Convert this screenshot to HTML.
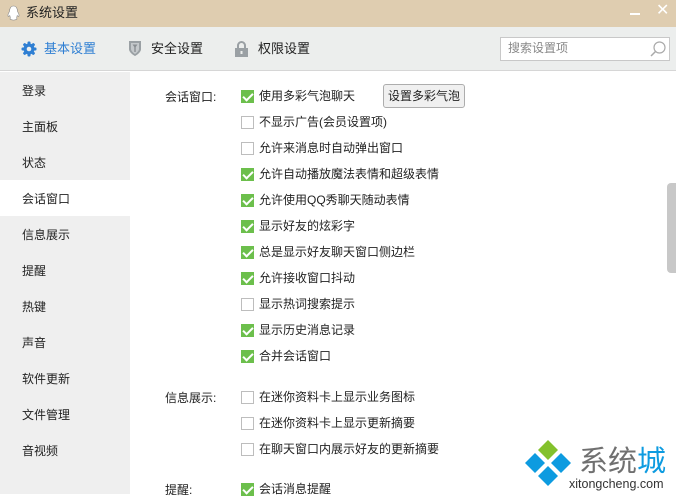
<!DOCTYPE html>
<html><head><meta charset="utf-8"><style>
*{margin:0;padding:0;box-sizing:border-box}
body{width:676px;height:494px;overflow:hidden;position:relative;background:#fff;font-family:"Liberation Sans","Noto Sans CJK SC",sans-serif;font-size:12px;color:#222}
.a{position:absolute;white-space:nowrap}
#title{left:0;top:0;width:676px;height:27px;background:#dfcdb0}
#tool{left:0;top:27px;width:676px;height:44px;background:#eceeed;border-bottom:1px solid #d6d6d6}
#side{left:0;top:72px;width:130px;height:422px;background:#efefef}
.si{position:absolute;left:22px;font-size:12px;color:#222;line-height:14px}
.cb{position:absolute;left:241px;width:13px;height:13px;border:1px solid #bdbdbd;background:#fff}
.cb.on{background:#6cbf4c;border-color:#6cbf4c}
.cb.on:after{content:"";position:absolute;left:3px;top:0px;width:4px;height:8px;border:solid #fff;border-width:0 2px 2px 0;transform:rotate(45deg)}
.t{position:absolute;left:259px;line-height:14px}
.lb{position:absolute;left:165px;line-height:14px}
</style></head><body>
<div class="a" id="title"></div>
<svg class="a" style="left:7px;top:5px" width="13" height="16" viewBox="0 0 13 16"><path d="M6.5 1C3.5 1 2.5 4 2.5 6.5 1.5 8 0.5 10 1.2 11.5 2 11.5 2.5 10.5 2.8 10.5 3 12 4 13 3 14 5 15.5 8 15.5 10 14 9 13 10 12 10.2 10.5 10.5 10.5 11 11.5 11.8 11.5 12.5 10 11.5 8 10.5 6.5 10.5 4 9.5 1 6.5 1Z" fill="#fff" stroke="#888" stroke-width=".6"/></svg>
<div class="a" style="left:26px;top:5px;font-size:13px;color:#222;line-height:16px">系统设置</div>
<div class="a" style="left:630px;top:13px;width:10px;height:1.5px;background:#fff"></div>
<div class="a" style="left:656px;top:3px;color:#fff;font-size:16px;line-height:16px">✕</div>
<div class="a" id="tool"></div>
<svg class="a" style="left:21px;top:41px" width="16" height="16" viewBox="0 0 16 16"><g fill="#2f7fd3"><circle cx="8" cy="8" r="5.5"/><rect x="6.5" y="0.5" width="3" height="15" rx="1"/><rect x="0.5" y="6.5" width="15" height="3" rx="1"/><rect x="6.5" y="0.5" width="3" height="15" rx="1" transform="rotate(45 8 8)"/><rect x="6.5" y="0.5" width="3" height="15" rx="1" transform="rotate(-45 8 8)"/></g><circle cx="8" cy="8" r="2.3" fill="#eceeed"/></svg>
<div class="a" style="left:44px;top:41px;font-size:13px;color:#2f7fd3;line-height:16px">基本设置</div>
<svg class="a" style="left:128px;top:40px" width="14" height="17" viewBox="0 0 14 17"><path d="M1 1H13V9C13 13 7 16 7 16 7 16 1 13 1 9Z" fill="#9aa0a4"/><path d="M3 3H11V9C11 11.5 7 14 7 14 7 14 3 11.5 3 9Z" fill="#c5c9cc"/><path d="M4.5 4.5H9.5L7 8Z" fill="#8a8f93"/><rect x="6.3" y="7" width="1.4" height="5" fill="#8a8f93"/></svg>
<div class="a" style="left:151px;top:41px;font-size:13px;line-height:16px">安全设置</div>
<svg class="a" style="left:234px;top:40px" width="15" height="17" viewBox="0 0 15 17"><path d="M4 8V5.5A3.5 3.5 0 0 1 11 5.5V8" fill="none" stroke="#9aa0a4" stroke-width="2"/><rect x="1" y="8" width="13" height="9" fill="#9aa0a4"/><rect x="6.5" y="11" width="2" height="3" fill="#eceeed"/></svg>
<div class="a" style="left:258px;top:41px;font-size:13px;line-height:16px">权限设置</div>
<div class="a" style="left:500px;top:37px;width:170px;height:24px;border:1px solid #c8c8c8;background:#fff"></div>
<div class="a" style="left:508px;top:41px;color:#888;line-height:14px">搜索设置项</div>
<svg class="a" style="left:649px;top:40px" width="18" height="18" viewBox="0 0 18 18"><circle cx="10.5" cy="7.5" r="5.5" fill="none" stroke="#aaa" stroke-width="1.2"/><path d="M6.5 11.5L2 16" stroke="#aaa" stroke-width="1.5"/></svg>
<div class="a" id="side"></div>
<div class="a" style="left:0;top:180px;width:130px;height:36px;background:#fff"></div>
<div class="si" style="top:84px">登录</div>
<div class="si" style="top:120px">主面板</div>
<div class="si" style="top:156px">状态</div>
<div class="si" style="top:192px">会话窗口</div>
<div class="si" style="top:228px">信息展示</div>
<div class="si" style="top:264px">提醒</div>
<div class="si" style="top:300px">热键</div>
<div class="si" style="top:336px">声音</div>
<div class="si" style="top:372px">软件更新</div>
<div class="si" style="top:408px">文件管理</div>
<div class="si" style="top:444px">音视频</div>
<div class="a" style="left:667px;top:183px;width:9px;height:90px;background:#c8c8c8;border-radius:4px 0 0 4px"></div>

<div class="lb" style="top:90px">会话窗口:</div>
<div class="cb on" style="top:90px"></div><div class="t" style="top:89px">使用多彩气泡聊天</div>
<div class="a" style="left:383px;top:84px;width:82px;height:24px;border:1px solid #adadad;border-radius:3px;background:#f0f0f0;line-height:22px;text-align:center">设置多彩气泡</div>
<div class="cb" style="top:116px"></div><div class="t" style="top:115px">不显示广告(会员设置项)</div>
<div class="cb" style="top:142px"></div><div class="t" style="top:141px">允许来消息时自动弹出窗口</div>
<div class="cb on" style="top:168px"></div><div class="t" style="top:167px">允许自动播放魔法表情和超级表情</div>
<div class="cb on" style="top:194px"></div><div class="t" style="top:193px">允许使用QQ秀聊天随动表情</div>
<div class="cb on" style="top:220px"></div><div class="t" style="top:219px">显示好友的炫彩字</div>
<div class="cb on" style="top:246px"></div><div class="t" style="top:245px">总是显示好友聊天窗口侧边栏</div>
<div class="cb on" style="top:272px"></div><div class="t" style="top:271px">允许接收窗口抖动</div>
<div class="cb" style="top:298px"></div><div class="t" style="top:297px">显示热词搜索提示</div>
<div class="cb on" style="top:324px"></div><div class="t" style="top:323px">显示历史消息记录</div>
<div class="cb on" style="top:350px"></div><div class="t" style="top:349px">合并会话窗口</div>

<div class="lb" style="top:391px">信息展示:</div>
<div class="cb" style="top:391px"></div><div class="t" style="top:390px">在迷你资料卡上显示业务图标</div>
<div class="cb" style="top:417px"></div><div class="t" style="top:416px">在迷你资料卡上显示更新摘要</div>
<div class="cb" style="top:443px"></div><div class="t" style="top:442px">在聊天窗口内展示好友的更新摘要</div>
<div class="lb" style="top:483px">提醒:</div>
<div class="cb on" style="top:483px"></div><div class="t" style="top:482px">会话消息提醒</div>

<svg class="a" style="left:522px;top:439px" width="52" height="52" viewBox="0 0 52 52"><path d="M26 1L36 11 26 21 16 11Z" fill="#83c12c"/><path d="M13 14L23 24 13 34 3 24Z" fill="#0d9be0"/><path d="M39 14L49 24 39 34 29 24Z" fill="#0d9be0"/><path d="M26 27L36 37 26 47 16 37Z" fill="#0d9be0"/></svg>
<div class="a" style="left:579px;top:446px;font-size:29px;line-height:32px;color:#707070">系统<span style="color:#0d9be0">城</span></div>
<div class="a" style="left:569px;top:477px;font-size:12.5px;line-height:14px;color:#333">xitongcheng.com</div>
</body></html>
